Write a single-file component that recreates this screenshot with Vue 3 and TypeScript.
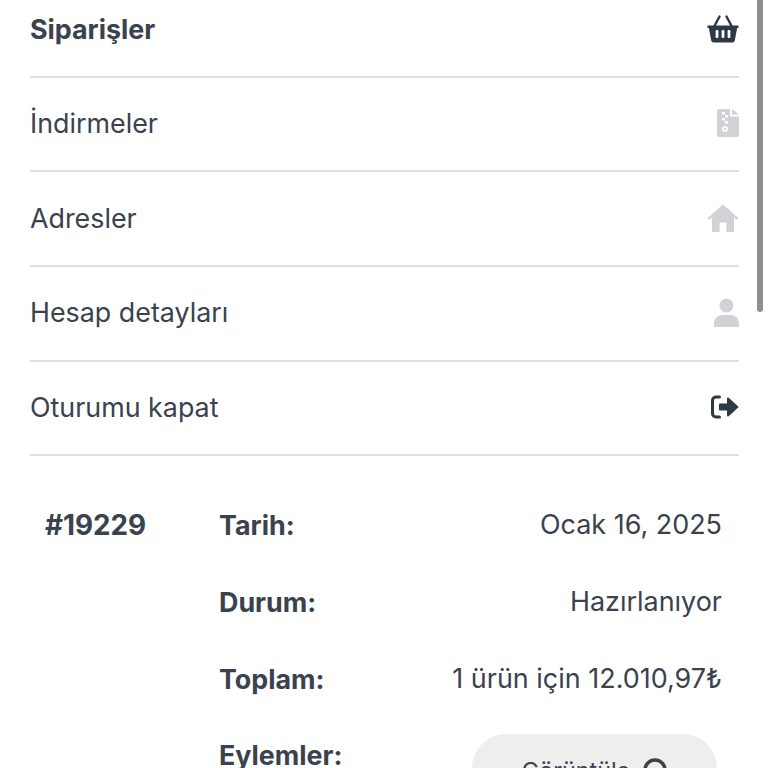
<script setup lang="ts">
const rows = [
  { label: 'Siparişler', icon: 'basket', active: true },
  { label: 'İndirmeler', icon: 'file', active: false },
  { label: 'Adresler', icon: 'home', active: false },
  { label: 'Hesap detayları', icon: 'user', active: false },
  { label: 'Oturumu kapat', icon: 'logout', active: false },
]
</script>

<template>
  <div class="page">
    <nav class="nav">
      <a v-for="r in rows" :key="r.label" class="row" :class="{ active: r.active }">
        <span>{{ r.label }}</span>
        <svg v-if="r.icon === 'basket'" class="ico dark" width="32" height="28" viewBox="0 0 32 28">
          <path d="M0.500 10.500h31v2.600h-1.400L27.800 25.600a2.400 2.400 0 0 1-2.300 1.900H6.500a2.400 2.400 0 0 1-2.300-1.900L1.900 13.100H0.500z" />
          <path d="M7.500 11 12.500 1.500M24.500 11 19.500 1.500" fill="none" stroke="currentColor" stroke-width="2.400" stroke-linecap="round" />
          <rect x="8.600" y="15" width="2.800" height="8" rx="1.200" fill="#fff" />
          <rect x="14.600" y="15" width="2.800" height="8" rx="1.200" fill="#fff" />
          <rect x="20.600" y="15" width="2.800" height="8" rx="1.200" fill="#fff" />
        </svg>
        <svg v-else-if="r.icon === 'file'" class="ico light" width="22" height="28" viewBox="0 0 22 28">
          <path d="M2 0h11v7.500h9V26a2 2 0 0 1-2 2H2a2 2 0 0 1-2-2V2a2 2 0 0 1 2-2z" />
          <path d="M15 0l7 5.500h-7z" />
          <path d="M5 3h3v2.600H5zM8 6h3v2.600H8zM5 9h3v2.600H5zM8 12h3v2.600H8z" fill="#fff" />
          <circle cx="8" cy="20" r="3" fill="#fff" />
          <circle cx="8" cy="20" r="1.300" />
        </svg>
        <svg v-else-if="r.icon === 'home'" class="ico light" width="32" height="28" viewBox="0 0 32 28">
          <path d="M16 0.500 31.500 14.200 29.800 16 27 13.600V28h-7.600v-9.500h-6.800V28H5V13.600L2.200 16 0.500 14.200z" />
        </svg>
        <svg v-else-if="r.icon === 'user'" class="ico light" width="25" height="29" viewBox="0 0 25 29">
          <circle cx="12.500" cy="7.500" r="7" />
          <path d="M0 29v-3.500C0 20.300 4 17 8.500 17h8c4.500 0 8.500 3.300 8.500 8.500V29z" />
        </svg>
        <svg v-else class="ico dark" width="28" height="24" viewBox="0 0 28 24">
          <path d="M8.500 2H5A3.500 3.500 0 0 0 1.500 5.500v13A3.500 3.500 0 0 0 5 22h3.500" fill="none" stroke="currentColor" stroke-width="3" stroke-linecap="round" />
          <path d="M9 8.500h7V3.500a1 1 0 0 1 1.700-.7L27.700 12l-10 9.200a1 1 0 0 1-1.700-.7v-5H9a1 1 0 0 1-1-1v-5a1 1 0 0 1 1-1z" />
        </svg>
      </a>
    </nav>

    <section class="order">
      <div class="num">#19229</div>
      <dl class="details">
        <div class="line"><dt>Tarih:</dt><dd>Ocak 16, 2025</dd></div>
        <div class="line"><dt>Durum:</dt><dd>Hazırlanıyor</dd></div>
        <div class="line"><dt>Toplam:</dt><dd>1 ürün için 12.010,97₺</dd></div>
        <div class="line actions">
          <dt>Eylemler:</dt>
          <dd>
            <button class="view">
              Görüntüle
              <svg width="24" height="24" viewBox="0 0 24 24"><circle cx="12" cy="12" r="10" fill="none" stroke="currentColor" stroke-width="3.500" /></svg>
            </button>
          </dd>
        </div>
      </dl>
    </section>

    <div class="thumb"></div>
  </div>
</template>

<style scoped>
.page {
  position: relative;
  width: 768px;
  height: 768px;
  overflow: hidden;
  background: #fff;
  color: #3a424e;
  font-family: Inter, "Noto Sans", sans-serif;
  font-size: 26.85px;
}
.nav {
  margin: -17px 29px 0 30px;
  display: flex;
  flex-direction: column;
}
.row {
  height: 94.7px;
  box-sizing: border-box;
  border-bottom: 2px solid #dfdfdf;
  display: flex;
  align-items: center;
  justify-content: space-between;
  padding-bottom: 2px;
}
.row.active {
  padding-bottom: 0;
  font-weight: 700;
}
.ico {
  fill: currentColor;
}
.dark {
  color: #2f3845;
}
.light {
  color: #d0d2d6;
}
.order {
  display: flex;
  padding: 31px 46px 0 45px;
}
.num {
  width: 174px;
  flex: none;
  font-size: 27.8px;
  font-weight: 700;
  line-height: 77px;
}
.details {
  flex: 1;
  margin: 0;
  margin-top: -1px;
}
.line {
  height: 77px;
  display: flex;
  align-items: center;
  justify-content: space-between;
}
dt {
  font-weight: 700;
}
dd {
  margin: 0;
  font-size: 26.95px;
}
.actions {
  align-items: flex-start;
}
.actions dt {
  line-height: 77px;
}
.view {
  margin: 17px 5px 0 0;
  width: 245px;
  height: 72px;
  border: 0;
  border-radius: 34px;
  background: #efeeed;
  color: #3a424e;
  font: inherit;
  font-size: 23.3px;
  display: flex;
  align-items: center;
  justify-content: center;
  gap: 13px;
}
.thumb {
  position: absolute;
  top: 0;
  left: 757px;
  width: 6px;
  height: 312px;
  border-radius: 0 0 3px 3px;
  background: #8e8e8e;
}
</style>
